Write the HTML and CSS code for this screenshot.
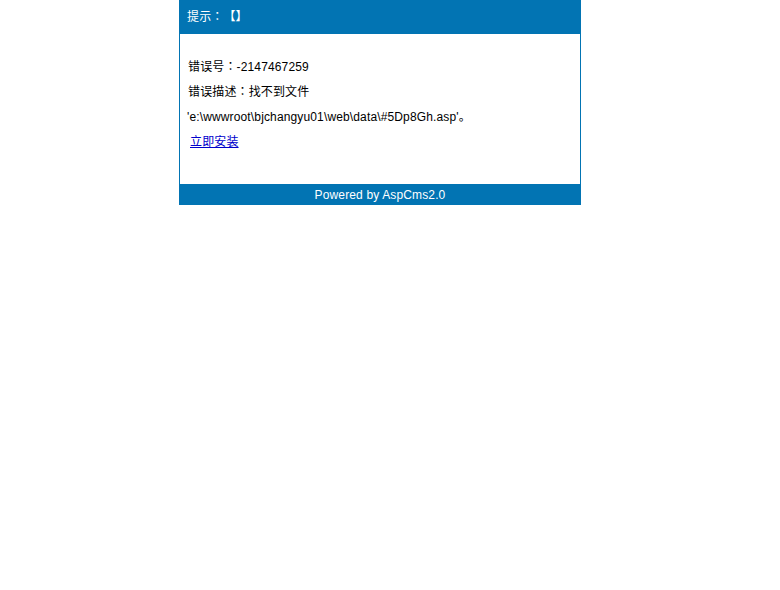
FILE: index.html
```html
<!DOCTYPE html>
<html>
<head>
<meta charset="utf-8">
<link rel="stylesheet" href="styles.css">
</head>
<body>
<div class="page">
  <div class="box">
    <div class="head">提示<span class="colon">：</span>【】</div>
    <div class="content">
      <p class="line">错误号<span class="colon">：</span>-2147467259</p>
      <p class="line">错误描述<span class="colon">：</span>找不到文件</p>
      <p class="line path">'e:\wwwroot\bjchangyu01\web\data\#5Dp8Gh.asp'。</p>
      <p class="line link-line"><a href="#">立即安装</a></p>
    </div>
    <div class="foot">Powered by AspCms2.0</div>
  </div>
</div>
</body>
</html>
```
FILE: styles.css
```css
html, body {
  margin: 0;
  padding: 0;
  background: #fff;
}
body {
  font-family: "Liberation Sans", "Noto Sans CJK SC", sans-serif;
  font-size: 12px;
  letter-spacing: 0.14px;
  text-spacing-trim: space-all;
  color: #000;
}
.colon {
  font-family: "Noto Sans CJK TC", sans-serif;
  line-height: 0;
}
.page {
  width: 760px;
}
.box {
  width: 400px;
  margin: 0 auto;
  border-left: 1px solid #0274b3;
  border-right: 1px solid #0274b3;
}
.head {
  background: #0274b3;
  color: #fff;
  height: 34px;
  line-height: 34px;
  padding-left: 7px;
}
.content {
  padding: 21px 8px 29px 8px;
}
.line {
  margin: 0;
  height: 25px;
  line-height: 25px;
  white-space: nowrap;
}
.path {
  margin-left: -1px;
}
.link-line {
  padding-left: 2px;
}
.link-line a {
  color: #0000cc;
  text-decoration: underline;
}
.foot {
  background: #0274b3;
  color: #fff;
  height: 21px;
  line-height: 22px;
  overflow: hidden;
  text-align: center;
}
```
